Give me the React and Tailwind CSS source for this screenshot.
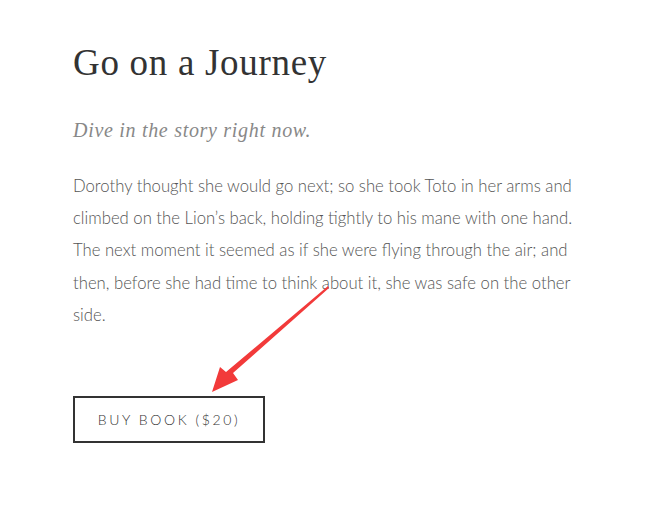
import React from 'react';

const lines = [
  'Dorothy thought she would go next; so she took Toto in her arms and',
  'climbed on the Lion\u2019s back, holding tightly to his mane with one hand.',
  'The next moment it seemed as if she were flying through the air; and',
  'then, before she had time to think about it, she was safe on the other',
  'side.',
];

const Arrow = () => (
  <svg
    className="absolute left-[205px] top-[282px] pointer-events-none"
    width="130"
    height="115"
    viewBox="0 0 130 115"
  >
    {/* tapered shaft + head, tip at (8,109) */}
    <polygon
      points="123,4 124,6 28,91 33,98 7,110 15,85 21,90"
      fill="#f23a3a"
    />
  </svg>
);

const App = () => {
  return (
    <div className="relative w-[653px] h-[522px] bg-white overflow-hidden">
      <div className="pl-[73px] pt-[40px] w-[620px]">
        <h1 className="font-['Liberation_Serif',serif] text-[37px] leading-[46px] tracking-[0.7px] text-[#333]">
          Go on a Journey
        </h1>
        <p className="mt-[30px] font-['Liberation_Serif',serif] italic text-[20px] leading-[28px] tracking-[0.7px] text-[#888]">
          Dive in the story right now.
        </p>
        <p className="mt-[26px] font-['Lato',sans-serif] font-light text-[16.7px] leading-[32.2px] text-[#555]">
          {lines.map((l, i) => (
            <span key={i} className="block whitespace-nowrap">{l}</span>
          ))}
        </p>
        <button className="mt-[65px] w-[192px] h-[47px] border-2 border-[#333] font-['Lato',sans-serif] font-light text-[14px] tracking-[2.6px] text-[#333] flex items-center justify-center">
          BUY BOOK ($20)
        </button>
      </div>
      <Arrow />
    </div>
  );
};

export default App;
